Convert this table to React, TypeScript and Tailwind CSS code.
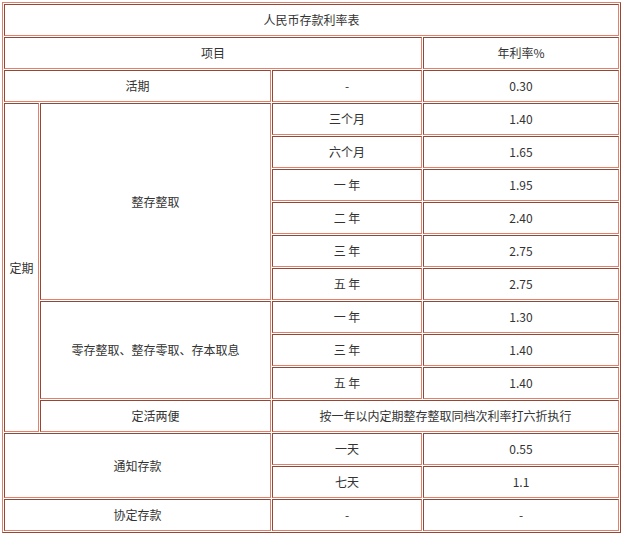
import React from 'react';

// inset cell look: dark top/left, light bottom/right
const cell =
  'flex items-center justify-center border border-t-[#8c4a3b] border-l-[#8c4a3b] border-b-[#e47f69] border-r-[#e47f69] bg-white';

function Cell({ className = '', children }: { className?: string; children?: React.ReactNode }) {
  return <div className={`${cell} ${className}`}>{children}</div>;
}

export default function App() {
  return (
    <div className="min-h-screen bg-white pt-[2px] pl-[2px] text-[12px] leading-none text-[#333] font-['Noto_Sans_CJK_SC','Noto_Sans',sans-serif]">
      <div className="grid w-[619px] grid-cols-[35px_231px_150px_196px] grid-rows-[repeat(16,32px)] gap-[1px] p-[1px] border border-t-[#e47f69] border-l-[#e47f69] border-b-[#8c4a3b] border-r-[#8c4a3b]">
        <Cell className="col-span-4">人民币存款利率表</Cell>

        <Cell className="col-span-3">项目</Cell>
        <Cell>年利率%</Cell>

        <Cell className="col-span-2">活期</Cell>
        <Cell>-</Cell>
        <Cell>0.30</Cell>

        {/* 定期 block */}
        <Cell className="row-span-10">定期</Cell>
        <Cell className="row-span-6">整存整取</Cell>
        <Cell>三个月</Cell>
        <Cell>1.40</Cell>
        <Cell>六个月</Cell>
        <Cell>1.65</Cell>
        <Cell>一 年</Cell>
        <Cell>1.95</Cell>
        <Cell>二 年</Cell>
        <Cell>2.40</Cell>
        <Cell>三 年</Cell>
        <Cell>2.75</Cell>
        <Cell>五 年</Cell>
        <Cell>2.75</Cell>

        <Cell className="row-span-3">零存整取、整存零取、存本取息</Cell>
        <Cell>一 年</Cell>
        <Cell>1.30</Cell>
        <Cell>三 年</Cell>
        <Cell>1.40</Cell>
        <Cell>五 年</Cell>
        <Cell>1.40</Cell>

        <Cell>定活两便</Cell>
        <Cell className="col-span-2">按一年以内定期整存整取同档次利率打六折执行</Cell>

        {/* 通知存款 */}
        <Cell className="col-span-2 row-span-2">通知存款</Cell>
        <Cell>一天</Cell>
        <Cell>0.55</Cell>
        <Cell>七天</Cell>
        <Cell>1.1</Cell>

        <Cell className="col-span-2">协定存款</Cell>
        <Cell>-</Cell>
        <Cell>-</Cell>
      </div>
    </div>
  );
}
